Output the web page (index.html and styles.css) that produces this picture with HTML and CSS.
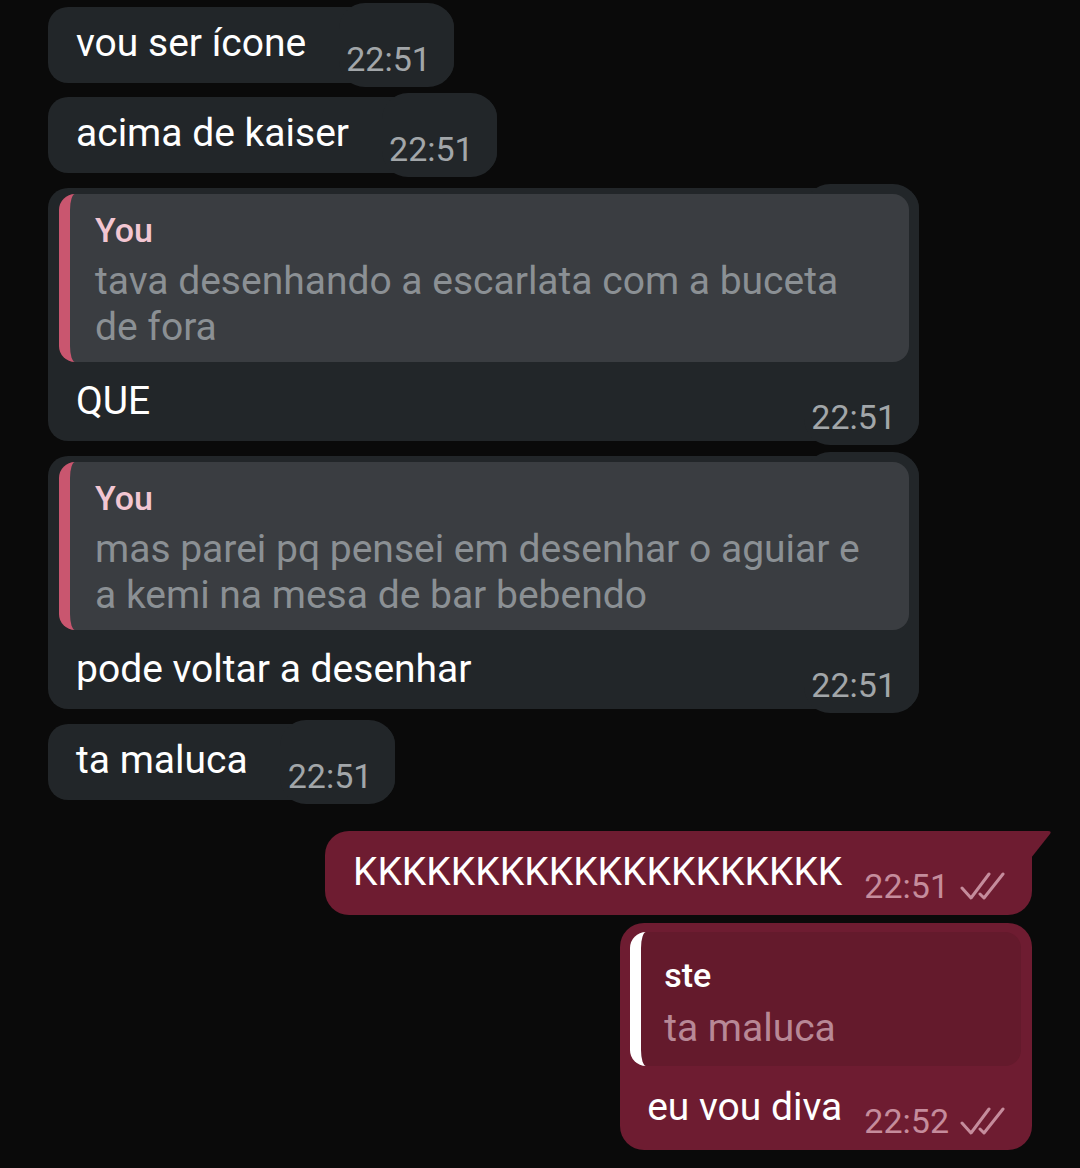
FILE: index.html
```html
<!DOCTYPE html>
<html lang="pt">
<head>
    <meta charset="UTF-8">
    <meta name="viewport" content="width=device-width, initial-scale=1.0">
    <title>Chat</title>
    <link rel="stylesheet" href="styles.css">
</head>
<body>
    <div class="chat">
        <div class="msg msg-in">
            <div class="row">
                <span class="text">vou ser ícone</span>
                <span class="time">22:51</span>
            </div>
        </div>
        <div class="msg msg-in gap-sm">
            <div class="row">
                <span class="text">acima de kaiser</span>
                <span class="time">22:51</span>
            </div>
        </div>
        <div class="msg msg-in has-reply">
            <div class="reply">
                <div class="reply-name">You</div>
                <div class="reply-text">tava desenhando a escarlata com a buceta de fora</div>
            </div>
            <div class="row">
                <span class="text">QUE</span>
                <span class="time">22:51</span>
            </div>
        </div>
        <div class="msg msg-in has-reply">
            <div class="reply">
                <div class="reply-name">You</div>
                <div class="reply-text">mas parei pq pensei em desenhar o aguiar e a kemi na mesa de bar bebendo</div>
            </div>
            <div class="row">
                <span class="text">pode voltar a desenhar</span>
                <span class="time">22:51</span>
            </div>
        </div>
        <div class="msg msg-in">
            <div class="row">
                <span class="text">ta maluca</span>
                <span class="time">22:51</span>
            </div>
        </div>

        <div class="msg msg-out tail">
            <div class="row">
                <span class="text">KKKKKKKKKKKKKKKKKKKK</span>
                <span class="meta">
                    <span class="time">22:51</span>
                    <svg class="check" viewBox="0 0 46 30" width="46" height="30"><path d="M3 17 L12 27 L30 3 M21 23 L25 27 L44 3"/></svg>
                </span>
            </div>
            <svg class="tail-svg" viewBox="0 0 21 27" width="21" height="27"><path d="M0 0 H17 Q21 0 19 3 L0 27 Z"/></svg>
        </div>
        <div class="msg msg-out has-reply">
            <div class="reply">
                <div class="reply-name">ste</div>
                <div class="reply-text">ta maluca</div>
            </div>
            <div class="row">
                <span class="text">eu vou diva</span>
                <span class="meta">
                    <span class="time">22:52</span>
                    <svg class="check" viewBox="0 0 46 30" width="46" height="30"><path d="M3 17 L12 27 L30 3 M21 23 L25 27 L44 3"/></svg>
                </span>
            </div>
        </div>
    </div>
</body>
</html>
```

FILE: styles.css
```css
body {
    margin: 0;
    padding: 0;
    background: #0a0a0a;
    font-family: Roboto, "Noto Sans", sans-serif;
    color: #fff;
    min-height: 100vh;
}
.chat {
    display: flex;
    flex-direction: column;
    padding-top: 7px;
}
.msg {
    position: relative;
    isolation: isolate;
    box-sizing: border-box;
}
.row {
    display: flex;
    align-items: flex-end;
}
.text {
    font-size: 39px;
    line-height: 48px;
    margin-bottom: 12px;
    white-space: nowrap;
}
.time {
    font-size: 34px;
    line-height: 40px;
    white-space: nowrap;
}

/* incoming */
.msg-in {
    align-self: flex-start;
    margin-left: 48px;
    margin-top: 15px;
    max-width: 871px;
    background: #222629;
    border-radius: 20px;
    padding: 12px 23px 4px 28px;
}
.msg-in:first-child {
    margin-top: 0;
}
.msg-in.gap-sm {
    margin-top: 14px;
}
.msg-in::before {
    content: "";
    position: absolute;
    right: 0;
    top: -4px;
    bottom: -4px;
    width: 115px;
    background: #222629;
    border-radius: 26px;
    z-index: -1;
}
.msg-in .time {
    color: #a2a6a9;
    margin-left: 40px;
}
.msg-in.has-reply {
    padding: 6px 0 4px;
}
.has-reply .row {
    padding: 15px 23px 0 28px;
}
.has-reply .time,
.has-reply .meta {
    margin-left: auto;
}

.reply {
    border-radius: 16px;
    border-left: 11px solid #c9566f;
    background: #3a3d41;
    margin: 0 10px 0 11px;
    padding: 14px 34px 12px 25px;
}
.reply-name {
    font-size: 34px;
    line-height: 44px;
    font-weight: 500;
    color: #f2c6d2;
    margin-bottom: 6px;
}
.reply-text {
    font-size: 39px;
    line-height: 46px;
    color: #8b9094;
}

/* outgoing */
.msg-out {
    align-self: flex-end;
    margin-right: 48px;
    margin-top: 31px;
    background: #6e1c31;
    border-radius: 24px;
    padding: 17px 27px 9px 28px;
}
.msg-out .text {
    margin-bottom: 10px;
}
.msg-out.tail {
    border-top-right-radius: 0;
}
.tail-svg {
    position: absolute;
    top: 0;
    right: -20px;
    fill: #6e1c31;
}
.meta {
    display: flex;
    align-items: center;
    height: 40px;
    margin-left: 22px;
    color: #c58c9c;
}
.check {
    margin-left: 10px;
    fill: none;
    stroke: #c58c9c;
    stroke-width: 3;
    stroke-linecap: round;
    stroke-linejoin: round;
}
.msg-out.has-reply {
    margin-top: 8px;
    padding: 9px 0 9px;
}
.msg-out.has-reply .row {
    padding: 17px 27px 0 27px;
}
.msg-out.has-reply .meta {
    margin-left: 22px;
}
.msg-out .reply {
    border-left-color: #fff;
    background: #641a2c;
    margin: 0 11px 0 10px;
    padding: 21px 30px 15px 23px;
}
.msg-out .reply-name {
    color: #fff;
    margin-bottom: 8px;
}
.msg-out .reply-text {
    color: #b88896;
}
```
